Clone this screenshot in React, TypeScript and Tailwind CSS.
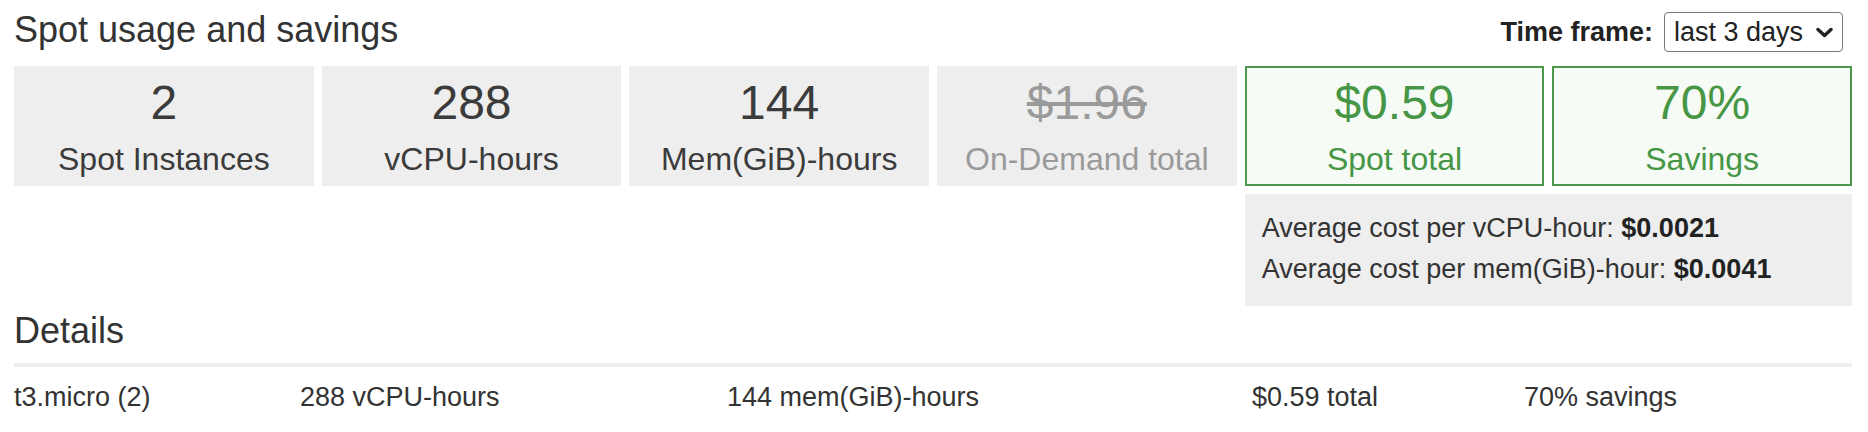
import React from 'react'

interface IStat {
  value: string
  label: string
  tone: 'plain' | 'muted' | 'good'
}

const stats: IStat[] = [
  { value: '2', label: 'Spot Instances', tone: 'plain' },
  { value: '288', label: 'vCPU-hours', tone: 'plain' },
  { value: '144', label: 'Mem(GiB)-hours', tone: 'plain' },
  { value: '$1.96', label: 'On-Demand total', tone: 'muted' },
  { value: '$0.59', label: 'Spot total', tone: 'good' },
  { value: '70%', label: 'Savings', tone: 'good' },
]

const rows = [['t3.micro (2)', '288 vCPU-hours', '144 mem(GiB)-hours', '$0.59 total', '70% savings']]

const StatBox = ({ stat }: { stat: IStat }) => {
  const good = stat.tone === 'good'
  const muted = stat.tone === 'muted'
  return (
    <div
      className={`flex flex-col items-center h-[120px] ${good ? 'border-2 border-[#4c984c] bg-[#f6fbf6] pt-[7px] text-[#469646]' : 'bg-[#eeeeee] pt-[9px]'} ${muted ? 'text-[#9a9a9a]' : ''} ${!good && !muted ? 'text-[#3b3b3b]' : ''}`}
    >
      <div className={`text-[48px] leading-[56px] ${muted ? 'line-through' : ''}`}>{stat.value}</div>
      <div className="text-[32px] leading-[40px] mt-[8px]">{stat.label}</div>
    </div>
  )
}

const App = () => {
  return (
    <div className="w-[1868px] h-[432px] overflow-hidden bg-white pl-[14px] pr-[16px] font-['Liberation_Sans',Arial,sans-serif] text-[#333]">
      {/* Header */}
      <div className="flex justify-between h-[66px]">
        <h2 className="mt-[10px] text-[36px] leading-[40px] text-[#333]">Spot usage and savings</h2>
        <div className="mt-[12px] flex items-center h-[40px] gap-[11px] mr-[9px]">
          <span className="text-[27px] font-bold text-[#222]">Time frame:</span>
          <div className="flex items-center h-[40px] w-[179px] pl-[9px] pr-[9px] border border-[#777] rounded-[4px] bg-white text-[27px] text-[#222]">
            <span>last 3 days</span>
            <svg className="ml-auto w-[17px] h-[11px]" viewBox="0 0 17 11">
              <path d="M2 2.5l6.5 6 6.5-6" fill="none" stroke="#222" strokeWidth="3.4" strokeLinecap="round" strokeLinejoin="round" />
            </svg>
          </div>
        </div>
      </div>

      {/* Totals */}
      <div className="grid grid-cols-6 gap-[8px]">
        {stats.map((s) => (
          <StatBox key={s.label} stat={s} />
        ))}
        <div className="col-start-5 col-span-2 h-[112px] bg-[#eeeeee] pt-[14px] px-[17px] text-[27px] leading-[41px] text-[#333]">
          <div>
            Average cost per vCPU-hour: <b className="text-[#222]">$0.0021</b>
          </div>
          <div>
            Average cost per mem(GiB)-hour: <b className="text-[#222]">$0.0041</b>
          </div>
        </div>
      </div>

      {/* Details */}
      <h2 className="mt-[5px] text-[36px] leading-[40px] text-[#333]">Details</h2>
      <div className="mt-[12px] h-[4px] bg-[#eeeeee]" />
      {rows.map((r) => (
        <div key={r[0]} className="mt-[10px] grid grid-cols-[286px_427px_525px_272px_1fr] text-[27px] leading-[40px] text-[#333]">
          {r.map((c) => (
            <div key={c}>{c}</div>
          ))}
        </div>
      ))}
    </div>
  )
}

export default App
